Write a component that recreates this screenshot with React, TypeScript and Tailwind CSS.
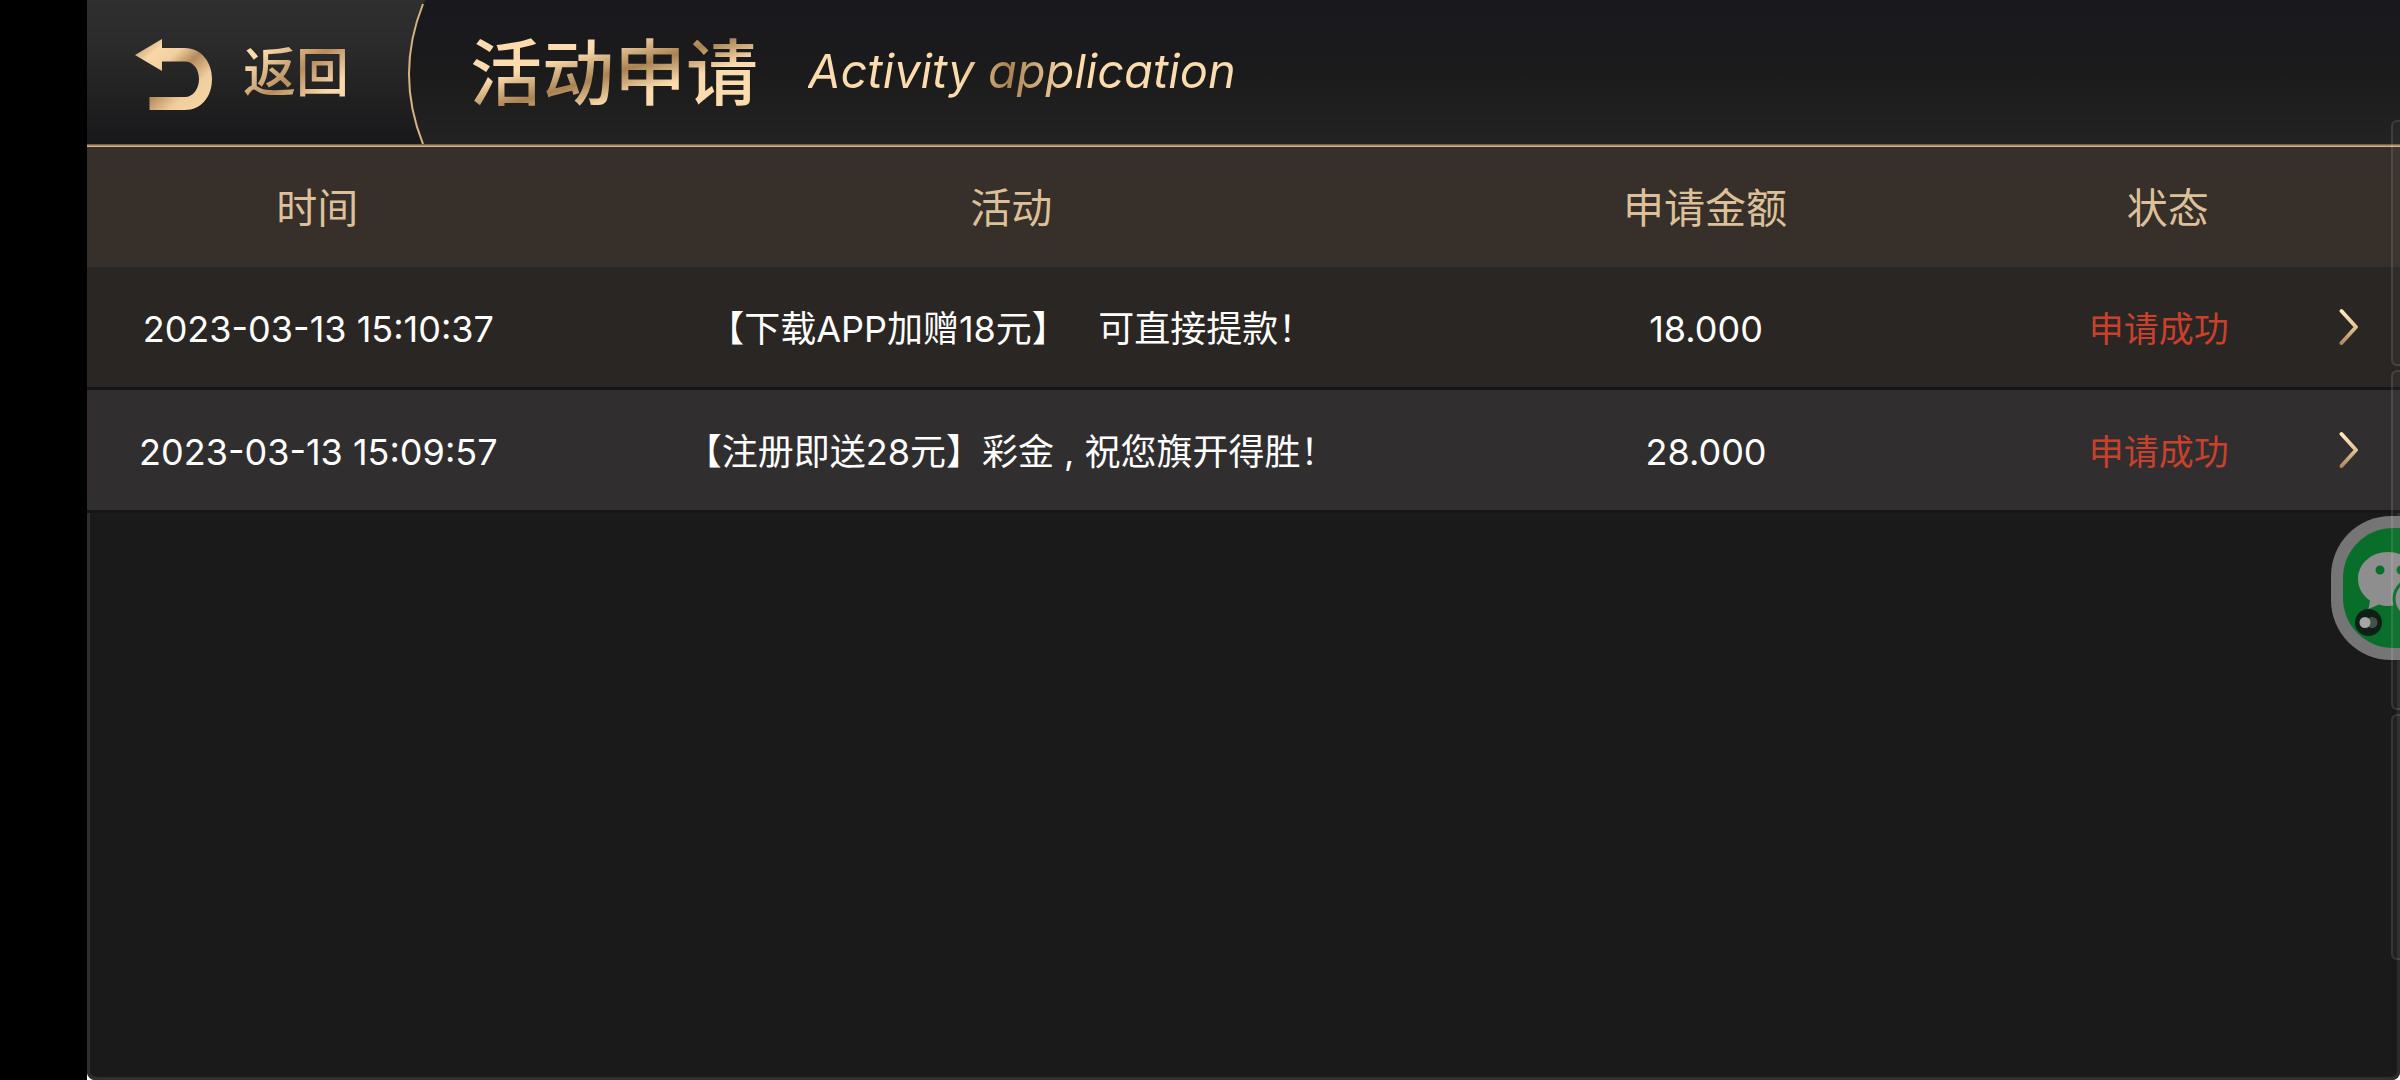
type Application = {
  time: string
  activity: string
  amount: string
  status: string
}

const columns = ['时间', '活动', '申请金额', '状态']

const applications: Application[] = [
  {
    time: '2023-03-13 15:10:37',
    activity: '【下载APP加赠18元】\u00a0\u00a0\u00a0可直接提款！',
    amount: '18.000',
    status: '申请成功',
  },
  {
    time: '2023-03-13 15:09:57',
    activity: '【注册即送28元】彩金 , 祝您旗开得胜！',
    amount: '28.000',
    status: '申请成功',
  },
]

const BackArrow = () => (
  <svg viewBox="0 0 80 74" className="relative h-[74px] w-20" aria-hidden="true">
    <defs>
      <linearGradient id="arrow-gold" x1="0" y1="0" x2="1" y2="1">
        <stop offset="0" stopColor="#b98d5b" />
        <stop offset="0.22" stopColor="#f8d7a8" />
        <stop offset="0.36" stopColor="#f3d0a0" />
        <stop offset="0.52" stopColor="#b58b5c" />
        <stop offset="0.72" stopColor="#f0cd9c" />
        <stop offset="1" stopColor="#f8d7a8" />
      </linearGradient>
    </defs>
    <path
      d="M1 18 L28 2 V11 H51 C67 11 78 25 78 42 C78 60 67 73 51 73 H15.5 V60 H51 C59 60 65 52 65 42 C65 32 59 24.5 51 24.5 H28 V34 Z"
      fill="url(#arrow-gold)"
    />
  </svg>
)

const BackPlate = () => (
  <svg
    viewBox="0 0 340 144"
    preserveAspectRatio="none"
    className="absolute inset-0 h-full w-full"
    aria-hidden="true"
  >
    <defs>
      <linearGradient id="plate" x1="0" y1="0" x2="0" y2="1">
        <stop offset="0" stopColor="#2f2f2f" />
        <stop offset="0.3" stopColor="#2b2b2b" />
        <stop offset="1" stopColor="#18181a" />
      </linearGradient>
    </defs>
    <path d="M0 0 H339 L336 4 Q308 74 336 144 H0 Z" fill="url(#plate)" />
    <path d="M336 4 Q308 74 336 144" fill="none" stroke="#d6b384" strokeWidth="2" />
  </svg>
)

const RowChevron = () => (
  <svg viewBox="0 0 20 40" className="h-10 w-5" aria-hidden="true">
    <defs>
      <linearGradient id="chevron-gold" x1="0" y1="0" x2="0" y2="1">
        <stop offset="0" stopColor="#fdeabf" />
        <stop offset="0.5" stopColor="#e3c596" />
        <stop offset="1" stopColor="#b18a62" />
      </linearGradient>
    </defs>
    <path
      d="M3.500 4 L18 20 L3.500 36"
      fill="none"
      stroke="url(#chevron-gold)"
      strokeWidth="3.800"
      strokeLinecap="round"
      strokeLinejoin="round"
    />
  </svg>
)

const SupportButton = () => (
  <button type="button" aria-label="WeChat" className="absolute top-[516px] right-0">
    <svg viewBox="0 0 69 144" className="h-36 w-[69px]" aria-hidden="true">
      <rect x="0" y="0" width="144" height="144" rx="60" fill="#757575" />
      <rect x="12" y="12" width="120" height="120" rx="50" fill="#0a6e2b" />
      <path
        d="M57 36 C40 36 27 48 27 63 C27 72 32 80 39 84.500 L37.500 93 L48 88.500 C51 89.500 54 90 57 90 C74 90 87 78 87 63 C87 48 74 36 57 36 Z"
        fill="#8e8e8e"
      />
      <circle cx="49" cy="54" r="4.500" fill="#0a6e2b" />
      <circle cx="70" cy="54" r="4.500" fill="#0a6e2b" />
      <ellipse cx="88" cy="83" rx="25" ry="22" fill="#8e8e8e" stroke="#0a6e2b" strokeWidth="3" />
      <circle cx="37.500" cy="106.500" r="13.500" fill="#0f1f16" />
      <circle cx="41" cy="106.500" r="5.500" fill="#46514b" />
      <circle cx="34" cy="106.500" r="5.500" fill="#a5a5a5" />
    </svg>
  </button>
)

const SideRail = () => (
  <div className="pointer-events-none absolute top-[120px] right-0 flex w-[9px] flex-col gap-1">
    <div className="h-[246px] rounded-l-md border-2 border-r-0 border-white/10 bg-white/3" />
    <div className="h-[340px] rounded-l-md border-2 border-r-0 border-white/10 bg-white/3" />
    <div className="h-[246px] rounded-l-md border-2 border-r-0 border-white/10 bg-white/3" />
  </div>
)

export default function App() {
  return (
    <div className="relative flex min-h-screen bg-black pl-[87px] font-[Inter,'Noto_Sans_CJK_SC',sans-serif]">
      <div className="flex flex-1 bg-white">
        <main className="flex flex-1 flex-col overflow-hidden rounded-b-lg bg-[#1a1a1b]">
          <header className="bg-linear-to-b from-[#19181d] via-[#1b1b1c] to-[#232324]">
            <div className="flex h-36 items-center">
              <button
                type="button"
                className="relative flex h-full w-[340px] items-center gap-[29px] pt-1 pl-[47px]"
              >
                <BackPlate />
                <BackArrow />
                <span className="relative bg-linear-to-br from-[#fcdcae] from-20% via-[#b88d5e] via-50% to-[#f9d9ab] to-75% bg-clip-text text-[53px] font-medium text-transparent">
                  返回
                </span>
              </button>
              <div className="flex items-center gap-[50px] pt-0.5 pl-[43px]">
                <h1 className="bg-linear-to-br from-[#fcdcae] from-32% via-[#a98252] via-50% to-[#fcdcae] to-66% bg-clip-text text-[72px] leading-[88px] font-medium text-transparent">
                  活动申请
                </h1>
                <p className="bg-linear-to-r from-[#fcdcae] from-35% via-[#a98252] via-46% to-[#fcdcae] to-60% bg-clip-text pr-2 pb-1 text-[47px] text-transparent italic">
                  Activity application
                </p>
              </div>
            </div>
            <div className="h-[3px] bg-linear-to-b from-[#5f4c37] to-[#efcb98]" />
          </header>

          <section className="flex-1 rounded-b-lg border-b-[3px] border-[#302e2f] shadow-[inset_3px_0_#302e2f,inset_-3px_0_#2c2b29]">
            <table className="w-full table-fixed border-separate border-spacing-0 text-center">
              <colgroup>
                <col className="w-1/5" />
                <col className="w-2/5" />
                <col className="w-1/5" />
                <col className="w-1/5" />
              </colgroup>
              <thead>
                <tr className="h-[120px] bg-[#372f29] text-[41px] text-[#dcc09a]">
                  {columns.map((column) => (
                    <th key={column} scope="col" className="pt-1 pr-0.5 font-normal">
                      {column}
                    </th>
                  ))}
                </tr>
              </thead>
              <tbody className="text-4xl text-white">
                {applications.map((item) => (
                  <tr
                    key={item.time}
                    className="h-[123px] odd:bg-[#2a2623] even:bg-[#312e30] *:border-b-[3px] *:border-[#171617] *:pt-1"
                  >
                    <td>{item.time}</td>
                    <td className="pr-0.5">{item.activity}</td>
                    <td>{item.amount}</td>
                    <td className="relative pr-5 text-[35px] text-[#c9402c]">
                      {item.status}
                      <button
                        type="button"
                        aria-label="详情"
                        className="absolute inset-y-0 right-4 flex w-[72px] items-center justify-center"
                      >
                        <RowChevron />
                      </button>
                    </td>
                  </tr>
                ))}
              </tbody>
            </table>
          </section>
        </main>
      </div>

      <SupportButton />
      <SideRail />
    </div>
  )
}
